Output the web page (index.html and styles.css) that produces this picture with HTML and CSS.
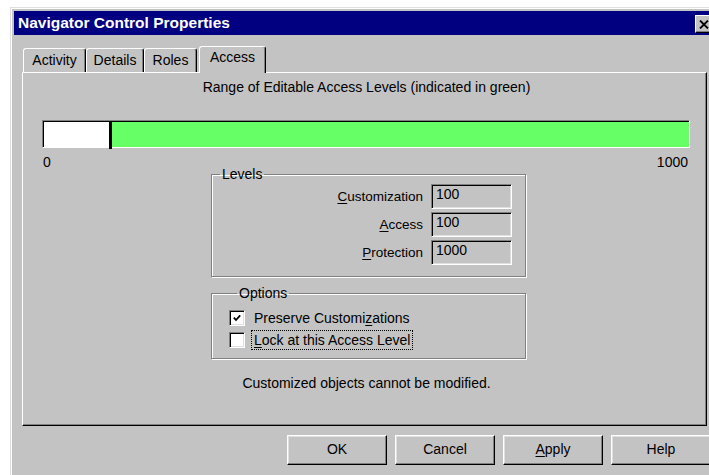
FILE: index.html
```html
<!DOCTYPE html>
<html lang="en">
<head>
<meta charset="utf-8">
<title>Navigator Control Properties</title>
<link rel="stylesheet" href="styles.css">
</head>
<body>
<div class="window">
  <div class="titlebar">
    <span class="title">Navigator Control Properties</span>
    <span class="close">
      <svg width="10" height="9" viewBox="0 0 10 9"><path d="M1 0.5 L9 8.5 M9 0.5 L1 8.5" stroke="#000" stroke-width="1.8" fill="none"/></svg>
    </span>
  </div>
  <div class="client">
    <div class="tabs">
      <div class="tab tab-activity">Activity</div>
      <div class="tab tab-details">Details</div>
      <div class="tab tab-roles">Roles</div>
      <div class="tab tab-access tab-active">Access</div>
    </div>
    <div class="panel">
      <div class="range-title">Range of Editable Access Levels (indicated in green)</div>
      <div class="range-bar">
        <div class="range-locked" style="width:10%"></div>
        <div class="range-marker"></div>
        <div class="range-editable"></div>
      </div>
      <div class="scale"><span>0</span><span>1000</span></div>

      <fieldset class="group levels">
        <legend>Levels</legend>
        <div class="level-row"><span class="level-label"><u>C</u>ustomization</span><span class="field">100</span></div>
        <div class="level-row"><span class="level-label"><u>A</u>ccess</span><span class="field">100</span></div>
        <div class="level-row"><span class="level-label"><u>P</u>rotection</span><span class="field">1000</span></div>
      </fieldset>

      <fieldset class="group options">
        <legend>Options</legend>
        <div class="check-row">
          <span class="checkbox checked"><svg width="8" height="8" viewBox="0 0 8 8"><path d="M0.8 3.6 L3 6 L7.2 1.4" stroke="#000" stroke-width="1.8" fill="none"/></svg></span>
          <span class="check-label">Preserve Customi<u>z</u>ations</span>
        </div>
        <div class="check-row">
          <span class="checkbox"></span>
          <span class="check-label focused"><u>L</u>ock at this Access Level</span>
        </div>
      </fieldset>

      <p class="note">Customized objects cannot be modified.</p>
    </div>
    <div class="buttons">
      <div class="btn">OK</div>
      <div class="btn">Cancel</div>
      <div class="btn"><u>A</u>pply</div>
      <div class="btn">Help</div>
    </div>
  </div>
</div>
</body>
</html>
```

FILE: styles.css
```css
* { box-sizing: border-box; }

html, body {
  margin: 0;
  padding: 0;
  background: #fff;
  overflow: hidden;
}

body {
  font-family: "Liberation Sans", Arial, sans-serif;
  font-size: 14px;
  color: #000;
}

u { text-decoration: underline; text-underline-offset: 2px; }

/* dialog frame */
.window {
  margin: 7px 0 0 10px;
  width: 712px;
  height: 480px;
  background: #c3c3c3;
  border-top: 1px solid #dfdfdf;
  border-left: 1px solid #dfdfdf;
  box-shadow: inset 1px 1px #fff;
  padding: 3px 0 0 3px;
}

.titlebar {
  height: 24px;
  background: #000080;
  color: #fff;
  display: flex;
  align-items: center;
  justify-content: space-between;
  padding-left: 4px;
}

.title {
  font-weight: bold;
  font-size: 15.5px;
}

.close {
  width: 18px;
  height: 18px;
  margin: 2px 9px 0 0;
  background: #c3c3c3;
  border: 1px solid;
  border-color: #fff #000 #000 #fff;
  box-shadow: inset -1px -1px #808080;
  display: flex;
  align-items: center;
  justify-content: center;
}

.client {
  padding: 11px 0 0 8px;
}

/* tab strip */
.tabs {
  display: flex;
  align-items: flex-end;
  height: 26px;
  margin-left: 1px;
}

.tab {
  height: 24px;
  padding-top: 3px;
  line-height: 16px;
  text-align: center;
  background: #c3c3c3;
  border-top: 1px solid #fff;
  border-left: 1px solid #fff;
  border-right: 1px solid #000;
  border-radius: 3px 3px 0 0;
  box-shadow: inset -1px 0 #808080;
}

.tab-activity { width: 63px; }
.tab-details { width: 58px; }
.tab-roles { width: 53px; }
.tab-access { width: 67px; margin-left: 2px; }

.tab-active {
  height: 27px;
  margin-bottom: -1px;
  position: relative;
  z-index: 1;
  padding-top: 2px;
}

/* page of the Access tab */
.panel {
  width: 685px;
  height: 354px;
  border: 1px solid;
  border-color: #fff #000 #000 #fff;
  box-shadow: inset -1px -1px #808080;
}

.range-title {
  text-align: center;
  line-height: 16px;
  padding-top: 6px;
  padding-left: 4px;
}

.range-bar {
  display: flex;
  margin: 25px 0 0 19px;
  width: 648px;
  height: 28px;
  border: 1px solid;
  border-color: #808080 #fff #fff #808080;
  box-shadow: inset 1px 1px #000;
  padding: 1px 0 0 1px;
}

.range-locked { background: #fff; }

.range-marker {
  width: 3px;
  background: #000;
  margin-bottom: -2px;
}

.range-editable {
  flex: 1;
  background: #66ff66;
}

.scale {
  display: flex;
  justify-content: space-between;
  width: 648px;
  margin: 7px 0 0 19px;
  padding: 0 2px 0 1px;
  line-height: 15px;
}

/* etched group boxes */
.group {
  margin: 0 0 0 188px;
  width: 315px;
  padding: 0;
  min-inline-size: 0;
  border: 1px solid #808080;
  box-shadow: inset 1px 1px #fff, 1px 1px #fff;
}

.group legend {
  padding: 0 2px;
  margin-left: 8px;
  line-height: 14px;
}

.levels {
  margin-top: -3px;
  padding: 3px 13px 11px 0;
  display: grid;
  row-gap: 3px;
}

.level-row {
  display: grid;
  grid-template-columns: 1fr 81px;
  column-gap: 8px;
  align-items: center;
}

.level-label { text-align: right; font-size: 13.5px; }

.field {
  height: 25px;
  border: 1px solid;
  border-color: #808080 #fff #fff #808080;
  box-shadow: inset 1px 1px #000, inset -1px -1px #dfdfdf;
  padding: 1px 0 0 4px;
  line-height: 16px;
}

.options {
  margin-top: 9px;
  padding: 8px 0 8px 17px;
  display: grid;
  row-gap: 2px;
}

.check-row {
  display: flex;
  align-items: center;
  height: 20px;
}

.checkbox {
  width: 16px;
  height: 16px;
  background: #fff;
  border: 1px solid;
  border-color: #808080 #fff #fff #808080;
  box-shadow: inset 1px 1px #000, inset -1px -1px #dfdfdf;
  display: flex;
  align-items: center;
  justify-content: center;
  margin-right: 6px;
}

.check-label {
  border: 1px dotted transparent;
  padding: 1px 2px;
  line-height: 16px;
}

.check-label.focused { border-color: #000; }

.note {
  margin: 16px 0 0;
  text-align: center;
  line-height: 16px;
  padding-left: 4px;
}

/* dialog buttons */
.buttons {
  display: flex;
  gap: 8px;
  margin-top: 9px;
  padding-left: 265px;
}

.btn {
  flex: none;
  width: 100px;
  height: 30px;
  border: 1px solid;
  border-color: #fff #000 #000 #fff;
  box-shadow: inset -1px -1px #808080, inset 1px 1px #dfdfdf;
  text-align: center;
  line-height: 27px;
}
```
